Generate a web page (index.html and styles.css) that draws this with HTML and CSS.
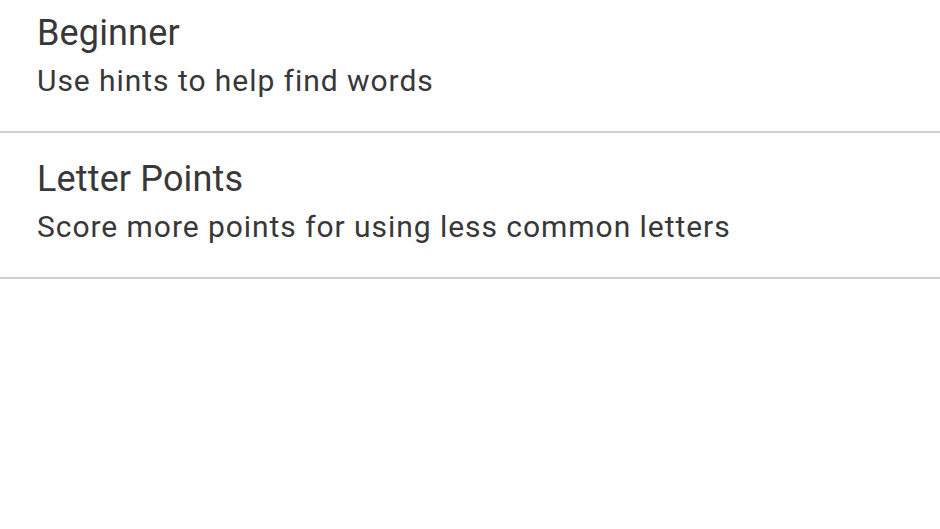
FILE: index.html
```html
<!DOCTYPE html>
<html>
<head>
<meta charset="utf-8">
<link rel="stylesheet" href="styles.css">
</head>
<body>
<ul class="list">
  <li class="item">
    <div class="title">Beginner</div>
    <div class="summary">Use hints to help find words</div>
  </li>
  <li class="item">
    <div class="title">Letter Points</div>
    <div class="summary">Score more points for using less common letters</div>
  </li>
</ul>
</body>
</html>
```
FILE: styles.css
```css
html, body {
  margin: 0;
  padding: 0;
  background: #fefefe;
}
body {
  width: 940px;
  height: 529px;
  overflow: hidden;
  font-family: Roboto, "Noto Sans", sans-serif;
  color: #383838;
}
.list {
  list-style: none;
  margin: -13px 0 0 0;
  padding: 0;
}
.item {
  padding: 23px 0 26px 37px;
  border-bottom: 2px solid #cfcfcd;
}
.title {
  font-size: 36px;
  line-height: 46px;
  letter-spacing: 0.15px;
}
.summary {
  font-size: 30px;
  line-height: 49px;
  letter-spacing: 0.95px;
}
```
